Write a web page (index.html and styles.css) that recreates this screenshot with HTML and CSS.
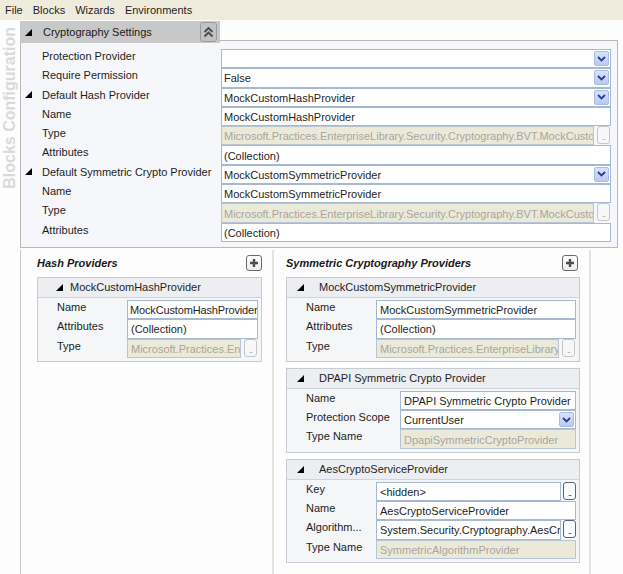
FILE: index.html
```html
<!DOCTYPE html>
<html>
<head>
<meta charset="utf-8">
<link rel="stylesheet" href="styles.css">
</head>
<body>
<div class="menubar"><span>File</span><span>Blocks</span><span>Wizards</span><span>Environments</span></div>
<div class="main">
  <div class="strip"><span class="vtext">Blocks Configuration</span></div>
  <div class="content">
    <div class="tabrow">
      <div class="tab">
        <svg class="tri" width="7" height="7" viewBox="0 0 7 7"><path d="M7 0V7H0Z" fill="#000"/></svg>
        <span class="tab-title">Cryptography Settings</span>
        <span class="collapse"><svg width="11" height="12" viewBox="0 0 11 12"><path d="M1.5 6L5.5 2L9.5 6M1.5 10.5L5.5 6.5L9.5 10.5" stroke="#4a4a4a" stroke-width="1.8" fill="none"/></svg></span>
      </div>
      <div class="tabfill"></div>
    </div>
    <div class="panel">
      <div class="prow"><span class="tcell"></span><span class="plabel">Protection Provider</span>
        <div class="box"><span class="txt"></span><span class="dd"><svg width="9" height="6" viewBox="0 0 9 6"><path d="M1 1l3.5 3.5L8 1" stroke="#26418a" stroke-width="1.8" fill="none"/></svg></span></div></div>
      <div class="prow"><span class="tcell"></span><span class="plabel">Require Permission</span>
        <div class="box"><span class="txt">False</span><span class="dd"><svg width="9" height="6" viewBox="0 0 9 6"><path d="M1 1l3.5 3.5L8 1" stroke="#26418a" stroke-width="1.8" fill="none"/></svg></span></div></div>
      <div class="prow"><span class="tcell"><svg width="7" height="7" viewBox="0 0 7 7"><path d="M7 0V7H0Z" fill="#000"/></svg></span><span class="plabel">Default Hash Provider</span>
        <div class="box"><span class="txt">MockCustomHashProvider</span><span class="dd"><svg width="9" height="6" viewBox="0 0 9 6"><path d="M1 1l3.5 3.5L8 1" stroke="#26418a" stroke-width="1.8" fill="none"/></svg></span></div></div>
      <div class="prow"><span class="tcell"></span><span class="plabel">Name</span>
        <div class="box"><span class="txt">MockCustomHashProvider</span></div></div>
      <div class="prow"><span class="tcell"></span><span class="plabel">Type</span>
        <div class="vcell"><div class="box ro"><span class="txt">Microsoft.Practices.EnterpriseLibrary.Security.Cryptography.BVT.MockCustomHashProvider</span></div><span class="ell dis">..</span></div></div>
      <div class="prow"><span class="tcell"></span><span class="plabel">Attributes</span>
        <div class="box"><span class="txt">(Collection)</span></div></div>
      <div class="prow"><span class="tcell"><svg width="7" height="7" viewBox="0 0 7 7"><path d="M7 0V7H0Z" fill="#000"/></svg></span><span class="plabel">Default Symmetric Crypto Provider</span>
        <div class="box"><span class="txt">MockCustomSymmetricProvider</span><span class="dd"><svg width="9" height="6" viewBox="0 0 9 6"><path d="M1 1l3.5 3.5L8 1" stroke="#26418a" stroke-width="1.8" fill="none"/></svg></span></div></div>
      <div class="prow"><span class="tcell"></span><span class="plabel">Name</span>
        <div class="box"><span class="txt">MockCustomSymmetricProvider</span></div></div>
      <div class="prow"><span class="tcell"></span><span class="plabel">Type</span>
        <div class="vcell"><div class="box ro"><span class="txt">Microsoft.Practices.EnterpriseLibrary.Security.Cryptography.BVT.MockCustomSymmetricProvider</span></div><span class="ell dis">..</span></div></div>
      <div class="prow"><span class="tcell"></span><span class="plabel">Attributes</span>
        <div class="box"><span class="txt">(Collection)</span></div></div>
    </div>
    <div class="lower">
      <div class="col hash">
        <div class="coltitle"><span class="ttl">Hash Providers</span><span class="plus"><svg width="10" height="10" viewBox="0 0 10 10"><path d="M5 1v8M1 5h8" stroke="#4e4e4e" stroke-width="2.4"/></svg></span></div>
        <div class="card">
          <div class="card-h hh"><svg width="7" height="7" viewBox="0 0 7 7"><path d="M7 0V7H0Z" fill="#000"/></svg><span>MockCustomHashProvider</span></div>
          <div class="card-b">
            <div class="crow"><span class="clabel">Name</span><div class="box c tight"><span class="txt">MockCustomHashProvider</span></div></div>
            <div class="crow"><span class="clabel">Attributes</span><div class="box c"><span class="txt">(Collection)</span></div></div>
            <div class="crow"><span class="clabel">Type</span><div class="vcell"><div class="box c ro"><span class="txt">Microsoft.Practices.EnterpriseLibrary.Security.Cryptography.BVT.MockCustomHashProvider</span></div><span class="ell dis">..</span></div></div>
          </div>
        </div>
      </div>
      <div class="col sym">
        <div class="coltitle"><span class="ttl">Symmetric Cryptography Providers</span><span class="plus sp"><svg width="10" height="10" viewBox="0 0 10 10"><path d="M5 1v8M1 5h8" stroke="#4e4e4e" stroke-width="2.4"/></svg></span></div>
        <div class="card">
          <div class="card-h"><svg width="7" height="7" viewBox="0 0 7 7"><path d="M7 0V7H0Z" fill="#000"/></svg><span>MockCustomSymmetricProvider</span></div>
          <div class="card-b">
            <div class="crow"><span class="clabel">Name</span><div class="box c"><span class="txt">MockCustomSymmetricProvider</span></div></div>
            <div class="crow"><span class="clabel">Attributes</span><div class="box c"><span class="txt">(Collection)</span></div></div>
            <div class="crow"><span class="clabel">Type</span><div class="vcell"><div class="box c ro"><span class="txt">Microsoft.Practices.EnterpriseLibrary.Security.Cryptography.BVT.MockCustomSymmetricProvider</span></div><span class="ell dis">..</span></div></div>
          </div>
        </div>
        <div class="card">
          <div class="card-h"><svg width="7" height="7" viewBox="0 0 7 7"><path d="M7 0V7H0Z" fill="#000"/></svg><span>DPAPI Symmetric Crypto Provider</span></div>
          <div class="card-b wide">
            <div class="crow"><span class="clabel">Name</span><div class="box c"><span class="txt">DPAPI Symmetric Crypto Provider</span></div></div>
            <div class="crow"><span class="clabel">Protection Scope</span><div class="box c"><span class="txt">CurrentUser</span><span class="dd"><svg width="9" height="6" viewBox="0 0 9 6"><path d="M1 1l3.5 3.5L8 1" stroke="#26418a" stroke-width="1.8" fill="none"/></svg></span></div></div>
            <div class="crow"><span class="clabel">Type Name</span><div class="box c ro"><span class="txt">DpapiSymmetricCryptoProvider</span></div></div>
          </div>
        </div>
        <div class="card">
          <div class="card-h"><svg width="7" height="7" viewBox="0 0 7 7"><path d="M7 0V7H0Z" fill="#000"/></svg><span>AesCryptoServiceProvider</span></div>
          <div class="card-b">
            <div class="crow"><span class="clabel">Key</span><div class="vcell"><div class="box c"><span class="txt">&lt;hidden&gt;</span></div><span class="ell en">..</span></div></div>
            <div class="crow"><span class="clabel">Name</span><div class="box c"><span class="txt">AesCryptoServiceProvider</span></div></div>
            <div class="crow"><span class="clabel">Algorithm...</span><div class="vcell"><div class="box c"><span class="txt">System.Security.Cryptography.AesCryptoServiceProvider</span></div><span class="ell en">..</span></div></div>
            <div class="crow"><span class="clabel">Type Name</span><div class="box c ro"><span class="txt">SymmetricAlgorithmProvider</span></div></div>
          </div>
        </div>
      </div>
    </div>
  </div>
</div>
</body>
</html>
```

FILE: styles.css
```css
* { box-sizing: border-box; margin: 0; padding: 0; }
html, body { width: 623px; height: 574px; overflow: hidden; }
body {
  font-family: "Liberation Sans", Arial, sans-serif;
  font-size: 11px;
  color: #1e1e1e;
  background: #fdfdfd;
}
.menubar {
  height: 20px;
  background: #f0ecdd;
  display: flex;
  align-items: center;
}
.menubar span { padding: 0 5px; }

.main { display: flex; height: 554px; padding-top: 1px; }
.strip { width: 20px; display: flex; justify-content: center; padding-top: 6px; }
.vtext {
  writing-mode: vertical-rl;
  transform: rotate(180deg);
  font-weight: bold;
  font-size: 16px;
  color: #dadada;
  align-self: flex-start;
  line-height: 20px;
}
.content { width: 603px; display: flex; flex-direction: column; }

.tabrow { display: flex; align-items: flex-end; height: 22px; }
.tab {
  width: 200px; height: 22px;
  background: #c8c8c8;
  display: flex; align-items: center;
  padding-left: 5px;
}
.tab .tri { margin-right: 11px; flex: none; }
.tab-title { flex: 1; color: #1a1a1a; }
.collapse {
  width: 17px; height: 20px; margin-right: 3px;
  border: 1px solid #9c9c9c; border-radius: 3px;
  background: #c2c2c2;
  display: flex; align-items: center; justify-content: center;
}
.tabfill {
  width: 398px; height: 3px;
  border-top: 1px solid #b8b8b8;
  border-right: 1px solid #b8b8b8;
  background: #f5f7fa;
}
.panel {
  width: 598px;
  border: 1px solid #b8b8b8; border-top: none;
  background: #f5f7fa;
  padding: 6px 0 5px 0;
}
.prow {
  display: grid;
  grid-template-columns: 21px 179px 390px;
  height: 19.3px;
}
.tcell { padding: 3px 0 0 4px; line-height: 0; }
.plabel { line-height: 15px; color: #1e1e1e; white-space: nowrap; }

.box {
  height: 100%;
  border: 1px solid #a7b9d0;
  background: #fff;
  display: flex; align-items: center;
  padding-left: 2px;
  overflow: hidden;
  min-width: 0;
}
.box .txt { flex: 1; white-space: nowrap; overflow: hidden; padding-top: 1px; }
.box.c { padding-left: 3px; }
.box.tight { padding-left: 2px; letter-spacing: -0.15px; }
.box.ro { background: #ebe9da; color: #a9a69c; border-color: #b9c5d3; }
.dd {
  flex: none;
  width: 15px; height: 15px; margin-right: 1px;
  background: linear-gradient(#d8e2fb, #b9caf2);
  border: 1px solid #a9bde5;
  border-radius: 2px;
  display: flex; align-items: center; justify-content: center;
}
.vcell { display: flex; height: 100%; min-width: 0; }
.vcell .box { flex: 1; }
.ell {
  flex: none;
  width: 13px; height: 18px;
  margin: 0 1px 0 3px;
  border-radius: 3px;
  display: flex; align-items: flex-end; justify-content: center;
  font-size: 9px; line-height: 11px; letter-spacing: -1px;
}
.ell.dis { border: 1px solid #c6c6c6; background: #f7f7f7; color: #a0a0a0; }
.ell.en { border: 1px solid #56657a; background: #fafbfd; color: #222; margin: 0 0 0 2px; }

.lower {
  flex: 1;
  display: flex;
  margin-top: 2px;
  border-left: 1px solid #c8c8c8;
  background: #fdfdfd;
}
.hash { width: 253px; padding: 4px 10px 0 16px; border-right: 2px solid #e3e3e3; }
.sym { width: 317px; padding: 4px 9px 0 12px; border-right: 2px solid #e3e3e3; }
.coltitle {
  display: flex; justify-content: space-between; align-items: center;
  height: 18px; margin-bottom: 5px;
}
.ttl { font-weight: bold; font-style: italic; color: #1a1a1a; }
.plus {
  width: 16px; height: 16px;
  border: 1px solid #6a6a6a; border-radius: 3px;
  background: linear-gradient(#ffffff, #ececec);
  display: flex; align-items: center; justify-content: center;
}
.plus.sp { margin-right: 2px; }

.card {
  border: 1px solid #c6ccd4;
  background: #f4f6f8;
  margin-bottom: 6px;
}
.card-h {
  height: 20px;
  background: #eceef2;
  border-bottom: 1px solid #ced4db;
  display: flex; align-items: center;
  padding-left: 10px;
  color: #1e1e1e;
}
.card-h svg { margin-right: 15px; flex: none; }
.card-h.hh { padding-left: 18px; }
.card-h.hh svg { margin-right: 7px; }
.card-b { padding: 2px 3px 3px 0; }
.crow {
  display: grid;
  grid-template-columns: 89px 1fr;
  height: 19.3px;
}
.card-b.wide .crow { grid-template-columns: 113px 1fr; }
.clabel { padding-left: 19px; line-height: 15px; white-space: nowrap; }
```
